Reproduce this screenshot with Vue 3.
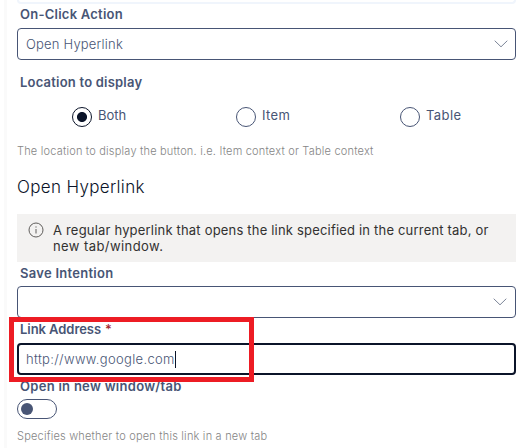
<script setup>
import { ref } from 'vue'

const locations = ['Both', 'Item', 'Table']
const location = ref('Both')
const action = 'Open Hyperlink'
const address = 'http://www.google.com'
</script>

<template>
  <main class="panel">
    <div class="previous"></div>

    <div class="label l-action"><span>On-Click Action</span></div>
    <div class="field">
      <span class="value v-action">{{ action }}</span>
      <svg class="chevron" width="14" height="8" viewBox="0 0 14 8"><path d="M.7.7 7 6.8 13.3.7" /></svg>
    </div>

    <div class="label l-location"><span>Location to display</span></div>
    <div class="radios">
      <div v-for="name in locations" :key="name" class="radio" @click="location = name">
        <span class="ring" :class="{ on: name === location }"></span>
        <span class="radio-name" :class="'r-' + name.toLowerCase()">{{ name }}</span>
      </div>
    </div>
    <div class="help h-location"><span>The location to display the button. i.e. Item context or Table context</span></div>

    <h2>Open Hyperlink</h2>
    <div class="info">
      <svg class="info-icon" width="16" height="16" viewBox="0 0 16 16">
        <circle cx="8" cy="8" r="7" />
        <path d="M8 7v4.5M8 4.4v1.2" />
      </svg>
      <div class="info-text">
        <div class="i-one">A regular hyperlink that opens the link specified in the current tab, or</div>
        <div class="i-two">new tab/window.</div>
      </div>
    </div>

    <div class="label l-save"><span>Save Intention</span></div>
    <div class="field save">
      <svg class="chevron" width="14" height="8" viewBox="0 0 14 8"><path d="M.7.7 7 6.8 13.3.7" /></svg>
    </div>

    <div class="link-group">
      <div class="label l-link"><span>Link Address</span><b>*</b></div>
      <div class="field focused">
        <span class="value v-link">{{ address }}</span><i class="caret"></i>
      </div>
      <div class="highlight"></div>
    </div>

    <div class="label l-open"><span>Open in new window/tab</span></div>
    <div class="toggle"><i></i></div>
    <div class="help h-open"><span>Specifies whether to open this link in a new tab</span></div>
  </main>
</template>

<style>
body {
  background: #fff;
}
</style>

<style scoped>
.panel {
  box-sizing: border-box;
  width: 525px;
  height: 448px;
  padding: 0 9px 0 17px;
  background: linear-gradient(90deg, #fff 4px, #fafafa 4px, #fafafa 7px, #fff 7px);
  overflow: hidden;
  font-family: Inter, "Open Sans", sans-serif;
  font-size: 13px;
  color: #485575;
  white-space: nowrap;
}
.previous {
  box-sizing: border-box;
  height: 4px;
  border: 2px solid #f0f5fc;
  border-top: 0;
  border-radius: 0 0 4px 4px;
}
.label {
  box-sizing: border-box;
  height: 24px;
  padding-left: 3px;
  line-height: 22px;
  font-size: 13px;
  font-weight: 600;
}
.l-action {
  line-height: 20px;
  letter-spacing: 0.24px;
}
.l-location {
  margin-top: 12px;
  line-height: 20px;
  letter-spacing: 0.21px;
}
.l-save {
  letter-spacing: 0.27px;
}
.l-link {
  height: 25px;
  letter-spacing: -0.06px;
}
.l-link b {
  margin-left: 4px;
  color: #a4262c;
  font-weight: 500;
}
.l-open {
  letter-spacing: 0.28px;
}
.field {
  box-sizing: border-box;
  display: flex;
  align-items: center;
  height: 32px;
  padding: 0 7px 0 8px;
  border: 1px solid #485575;
  border-radius: 4px;
}
.value {
  font-size: 13px;
  font-weight: 300;
  line-height: 20px;
}
.v-action {
  padding-bottom: 1px;
  letter-spacing: 0.2px;
}
.v-link {
  letter-spacing: 0.33px;
}
.chevron {
  margin-left: auto;
  fill: none;
  stroke: #7b8497;
  stroke-width: 1;
}
.save {
  padding-right: 8px;
}
.radios {
  display: grid;
  grid-template-columns: repeat(3, 164px);
  margin-top: 11px;
  padding-left: 55px;
}
.radio {
  display: flex;
  height: 20px;
  gap: 6px;
}
.ring {
  box-sizing: border-box;
  width: 20px;
  height: 20px;
  border: 1px solid #485575;
  border-radius: 50%;
}
.ring.on {
  border-color: #0b1429;
  background: radial-gradient(circle, #0b1429 4.6px, transparent 5.4px);
}
.radio-name {
  line-height: 17px;
}
.r-item,
.r-table {
  letter-spacing: 0.4px;
}
.help {
  height: 16px;
  line-height: 17px;
  font-size: 11px;
  font-weight: 300;
  letter-spacing: 0.2px;
  color: #858585;
}
.h-location {
  margin-top: 16px;
}
h2 {
  height: 28px;
  margin: 14px 0 13px;
  font-size: 17px;
  line-height: 28px;
  font-weight: 300;
  letter-spacing: 0.33px;
  color: #0b1429;
}
.info {
  box-sizing: border-box;
  display: flex;
  gap: 9px;
  height: 48px;
  padding: 8px 12px 0 11px;
  background: #f3f2f1;
  color: #323130;
}
.info-icon {
  fill: none;
  stroke: #605e5c;
  stroke-width: 1;
}
.info-text {
  line-height: 16px;
}
.i-one {
  letter-spacing: 0.19px;
}
.i-two {
  letter-spacing: 0.42px;
}
.link-group {
  position: relative;
}
.focused {
  border: 2px solid #0b1429;
  padding-left: 7px;
}
.caret {
  width: 1px;
  height: 17px;
  background: #0b1429;
}
.highlight {
  position: absolute;
  box-sizing: border-box;
  left: -8px;
  top: -1px;
  width: 245px;
  height: 65px;
  border: 5px solid #ed1c24;
}
.toggle {
  box-sizing: border-box;
  display: flex;
  align-items: center;
  width: 40px;
  height: 20px;
  padding-left: 3px;
  border: 1px solid #485575;
  border-radius: 10px;
}
.toggle i {
  width: 12px;
  height: 12px;
  border-radius: 50%;
  background: #485575;
}
.h-open {
  margin-top: 9px;
}
</style>
